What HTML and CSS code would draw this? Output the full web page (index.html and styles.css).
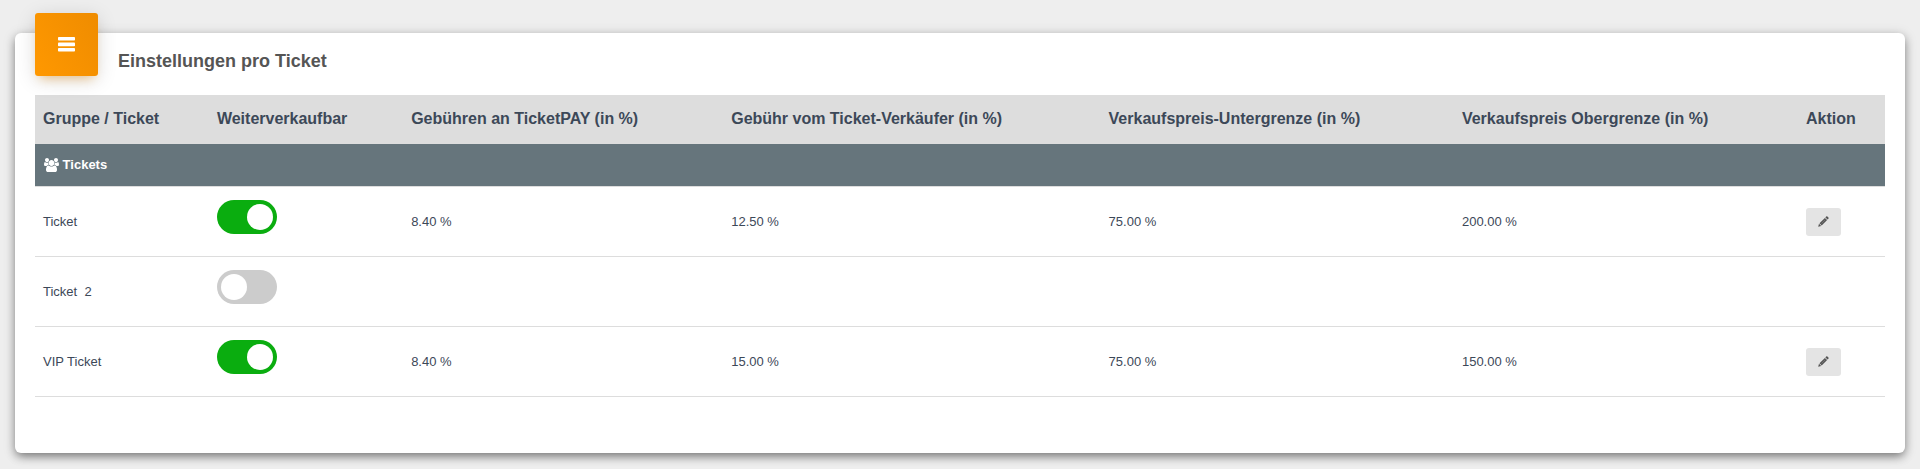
FILE: index.html
```html
<!DOCTYPE html>
<html lang="de">
  <head>
    <meta charset="UTF-8" />
    <meta name="viewport" content="width=device-width, initial-scale=1.0" />
    <title>Einstellungen pro Ticket</title>
    <link rel="stylesheet" href="styles.css">
  </head>
  <body>
    <div class="card">
      <div class="card-header">
        <div class="card-icon">
          <svg width="17" height="15" viewBox="0 0 17 15">
            <rect x="0" y="0" width="17" height="3.6" rx="0.8" />
            <rect x="0" y="5.6" width="17" height="3.6" rx="0.8" />
            <rect x="0" y="11" width="17" height="3.6" rx="0.8" />
          </svg>
        </div>
        <h4 class="card-title">Einstellungen pro Ticket</h4>
      </div>

      <table class="ticket-table">
        <colgroup>
          <col class="col-ticket" />
          <col class="col-resale" />
          <col class="col-fee" />
          <col class="col-seller-fee" />
          <col class="col-min" />
          <col class="col-max" />
          <col />
        </colgroup>
        <thead>
          <tr>
            <th>Gruppe / Ticket</th>
            <th>Weiterverkaufbar</th>
            <th>Gebühren an TicketPAY (in %)</th>
            <th>Gebühr vom Ticket-Verkäufer (in %)</th>
            <th>Verkaufspreis-Untergrenze (in %)</th>
            <th>Verkaufspreis Obergrenze (in %)</th>
            <th>Aktion</th>
          </tr>
        </thead>
        <tbody>
          <tr class="group-row">
            <td colspan="7">
              <svg class="group-icon" width="15" height="14" viewBox="0 0 1920 1792">
                <path d="M593 896q-162 5-265 128h-134q-82 0-138-40.5t-56-118.5q0-353 124-353 6 0 43.5 21t97.5 42.5 119 21.5q67 0 133-23-5 37-5 66 0 139 81 256zm1071 637q0 120-73 189.5t-194 69.5h-874q-121 0-194-69.5t-73-189.5q0-53 3.5-103.5t14-109 26.5-108.5 43-97.5 62-81 85.5-53.5 111.5-20q10 0 43 21.5t73 48 107 48 135 21.5 135-21.5 107-48 73-48 43-21.5q61 0 111.5 20t85.5 53.5 62 81 43 97.5 26.5 108.5 14 109 3.5 103.5zm-1024-1277q0 106-75 181t-181 75-181-75-75-181 75-181 181-75 181 75 75 181zm704 384q0 159-112.5 271.5t-271.5 112.5-271.5-112.5-112.5-271.5 112.5-271.5 271.5-112.5 271.5 112.5 112.5 271.5zm576 225q0 78-56 118.5t-138 40.5h-134q-103-123-265-128 81-117 81-256 0-29-5-66 66 23 133 23 59 0 119-21.5t97.5-42.5 43.5-21q124 0 124 353zm-128-609q0 106-75 181t-181 75-181-75-75-181 75-181 181-75 181 75 75 181z" />
              </svg>
              Tickets
            </td>
          </tr>
          <tr>
            <td><label for="resale1">Ticket</label></td>
            <td class="switch-cell"><input type="checkbox" class="switch" id="resale1" checked /></td>
            <td>8.40 %</td>
            <td>12.50 %</td>
            <td>75.00 %</td>
            <td>200.00 %</td>
            <td>
              <button type="button" class="edit-button" aria-label="Ticket bearbeiten">
                <svg width="11" height="11" viewBox="0 0 11 11">
                  <path d="M8.2 0.6Q8.8 0 9.4 0.6L10.4 1.6Q11 2.2 10.4 2.8L9.6 3.6L7.4 1.4ZM6.9 1.9L9.1 4.1L3.7 9.5L1.5 7.3ZM1 7.8L3.2 10L0.2 10.8Z" />
                  <path class="pencil-line" d="M7.2 3.8L3.4 7.6" />
                </svg>
              </button>
            </td>
          </tr>
          <tr>
            <td><label for="resale2">Ticket&nbsp; 2</label></td>
            <td class="switch-cell"><input type="checkbox" class="switch" id="resale2" /></td>
            <td></td>
            <td></td>
            <td></td>
            <td></td>
            <td></td>
          </tr>
          <tr>
            <td><label for="resale3">VIP Ticket</label></td>
            <td class="switch-cell"><input type="checkbox" class="switch" id="resale3" checked /></td>
            <td>8.40 %</td>
            <td>15.00 %</td>
            <td>75.00 %</td>
            <td>150.00 %</td>
            <td>
              <button type="button" class="edit-button" aria-label="VIP Ticket bearbeiten">
                <svg width="11" height="11" viewBox="0 0 11 11">
                  <path d="M8.2 0.6Q8.8 0 9.4 0.6L10.4 1.6Q11 2.2 10.4 2.8L9.6 3.6L7.4 1.4ZM6.9 1.9L9.1 4.1L3.7 9.5L1.5 7.3ZM1 7.8L3.2 10L0.2 10.8Z" />
                  <path class="pencil-line" d="M7.2 3.8L3.4 7.6" />
                </svg>
              </button>
            </td>
          </tr>
        </tbody>
      </table>
    </div>
  </body>
</html>
```
FILE: styles.css
```css
body {
  margin: 0;
  padding: 33px 15px 16px;
  background-color: #eeeeee;
  font-family: Arial, "Liberation Sans", sans-serif;
  font-size: 13px;
  color: #3c4858;
}

.card {
  padding: 0 20px 56px;
  border-radius: 6px;
  background-color: #ffffff;
  box-shadow: 0 4px 10px -1px rgba(0, 0, 0, 0.45), 0 2px 14px rgba(0, 0, 0, 0.14);
}

.card-header {
  display: flex;
  align-items: flex-start;
  gap: 20px;
  height: 62px;
}

.card-icon {
  display: flex;
  align-items: center;
  justify-content: center;
  width: 63px;
  height: 63px;
  margin-top: -20px;
  border-radius: 3px;
  background: linear-gradient(60deg, #ff9800, #ef8c00);
  box-shadow: 0 4px 20px rgba(0, 0, 0, 0.14), 0 7px 10px -5px rgba(255, 152, 0, 0.4);
}

.card-icon svg {
  fill: #ffffff;
}

.card-title {
  margin: 15px 0 0;
  font-size: 18px;
  line-height: 26px;
  color: #555555;
}

.ticket-table {
  width: 100%;
  table-layout: fixed;
  border-spacing: 0;
}

.col-ticket {
  width: 9.4%;
}
.col-resale {
  width: 10.5%;
}
.col-fee {
  width: 17.3%;
}
.col-seller-fee {
  width: 20.4%;
}
.col-min {
  width: 19.1%;
}
.col-max {
  width: 18.6%;
}

.ticket-table th {
  padding: 12px 8px 13px;
  background-color: #dddddd;
  font-size: 16px;
  line-height: 24px;
  text-align: left;
}

.ticket-table td {
  padding: 12px 8px;
  border-bottom: 1px solid #dddddd;
  line-height: 18px;
}

.ticket-table .group-row td {
  background-color: #66757c;
  background-clip: padding-box;
  color: #ffffff;
  font-weight: bold;
}

.group-icon {
  margin-left: 1px;
  fill: #ffffff;
  vertical-align: -3px;
}

.ticket-table .switch-cell {
  padding: 13px 8px 22px;
}

.switch {
  appearance: none;
  display: block;
  width: 60px;
  height: 34px;
  margin: 0;
  padding: 4px;
  box-sizing: border-box;
  border-radius: 17px;
  background-color: #cccccc;
  cursor: pointer;
}

.switch::before {
  content: "";
  display: block;
  width: 26px;
  height: 26px;
  border-radius: 50%;
  background-color: #ffffff;
}

.switch:checked {
  background-color: #0aad0f;
}

.switch:checked::before {
  margin-left: auto;
}

.edit-button {
  display: flex;
  align-items: center;
  justify-content: center;
  width: 35px;
  height: 28px;
  padding: 0;
  border: none;
  border-radius: 3px;
  background-color: #e4e4e4;
  cursor: pointer;
}

.edit-button svg {
  fill: #555555;
}

.pencil-line {
  fill: none;
  stroke: #8a8a8a;
  stroke-width: 0.6;
}
```
